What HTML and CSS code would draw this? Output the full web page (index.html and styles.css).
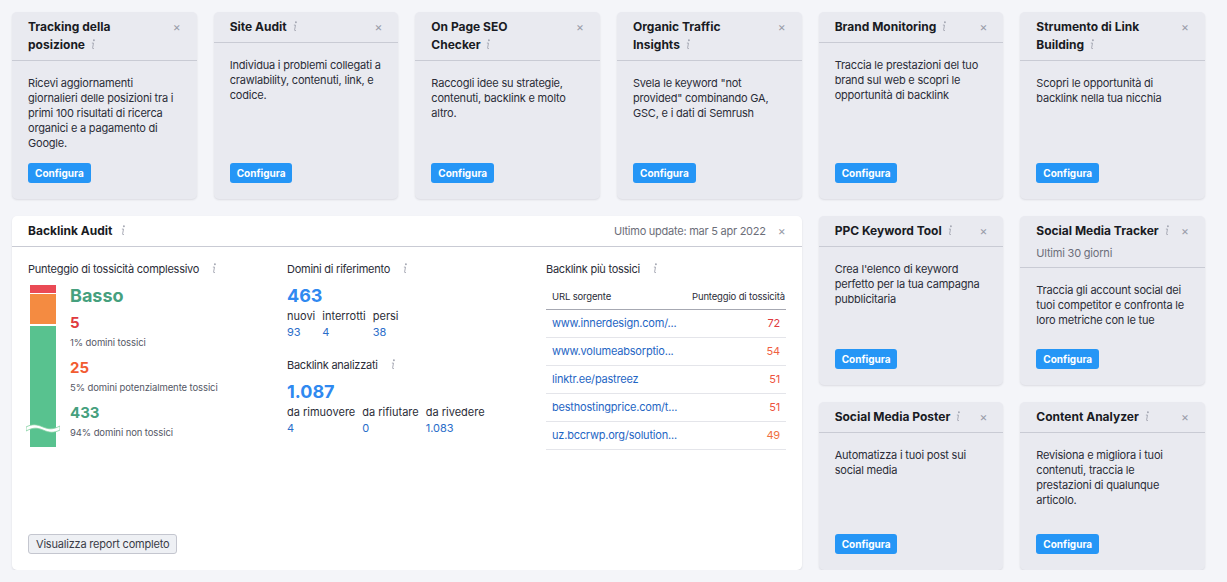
FILE: index.html
```html
<!DOCTYPE html>
<html lang="it">
<head>
<meta charset="utf-8">
<title>Dashboard</title>
<link rel="stylesheet" href="styles.css">
</head>
<body>
<svg width="0" height="0" style="position:absolute">
  <defs>
    <symbol id="info" viewBox="0 0 6 11">
      <circle cx="3.9" cy="1.2" r="0.95" fill="#a4a7b2"/>
      <path d="M1.9 4.1 H3.5 L2.6 8.9 Q2.4 9.9 3.9 9.5" fill="none" stroke="#a4a7b2" stroke-width="0.95"/>
    </symbol>
  </defs>
</svg>
<main class="grid">
  <section class="card">
    <header class="card-head">
      <h2 class="title">Tracking della posizione <svg class="info"><use href="#info"/></svg></h2>
      <span class="close">×</span>
    </header>
    <div class="card-body">
      <p>Ricevi aggiornamenti giornalieri delle posizioni tra i primi 100 risultati di ricerca organici e a pagamento di Google.</p>
      <button class="btn">Configura</button>
    </div>
  </section>
  <section class="card">
    <header class="card-head">
      <h2 class="title">Site Audit <svg class="info"><use href="#info"/></svg></h2>
      <span class="close">×</span>
    </header>
    <div class="card-body">
      <p>Individua i problemi collegati a crawlability, contenuti, link, e codice.</p>
      <button class="btn">Configura</button>
    </div>
  </section>
  <section class="card">
    <header class="card-head">
      <h2 class="title">On Page SEO Checker <svg class="info"><use href="#info"/></svg></h2>
      <span class="close">×</span>
    </header>
    <div class="card-body">
      <p>Raccogli idee su strategie, contenuti, backlink e molto altro.</p>
      <button class="btn">Configura</button>
    </div>
  </section>
  <section class="card">
    <header class="card-head">
      <h2 class="title">Organic Traffic Insights <svg class="info"><use href="#info"/></svg></h2>
      <span class="close">×</span>
    </header>
    <div class="card-body">
      <p>Svela le keyword "not provided" combinando GA, GSC, e i dati di Semrush</p>
      <button class="btn">Configura</button>
    </div>
  </section>
  <section class="card">
    <header class="card-head">
      <h2 class="title">Brand Monitoring <svg class="info"><use href="#info"/></svg></h2>
      <span class="close">×</span>
    </header>
    <div class="card-body">
      <p>Traccia le prestazioni del tuo brand sul web e scopri le opportunità di backlink</p>
      <button class="btn">Configura</button>
    </div>
  </section>
  <section class="card">
    <header class="card-head">
      <h2 class="title">Strumento di Link Building <svg class="info"><use href="#info"/></svg></h2>
      <span class="close">×</span>
    </header>
    <div class="card-body">
      <p>Scopri le opportunità di backlink nella tua nicchia</p>
      <button class="btn">Configura</button>
    </div>
  </section>

  <section class="audit">
    <header class="audit-head">
      <h2 class="title">Backlink Audit <svg class="info"><use href="#info"/></svg></h2>
      <span class="updated">Ultimo update: mar 5 apr 2022</span>
      <span class="close">×</span>
    </header>
    <div class="audit-body">
      <div class="col">
        <div class="label">Punteggio di tossicità complessivo <svg class="info"><use href="#info"/></svg></div>
        <div class="tox">
          <div class="bar">
            <div class="seg red"></div>
            <div class="seg orange"></div>
            <div class="seg green"></div>
            <svg class="wave" viewBox="0 0 34 12" width="34" height="12">
              <path d="M0 5 C6 2 10 2 17 5 C24 8 28 7 34 4 L34 8 C28 11 24 11 17 8 C10 5 6 6 0 9 Z" fill="#ffffff" stroke="#7fcf9f" stroke-width="0.8"/>
            </svg>
          </div>
          <div class="tox-text">
            <div class="level">Basso</div>
            <div class="grp"><div class="num n-red">5</div><div class="sub">1% domini tossici</div></div>
            <div class="grp"><div class="num n-orange">25</div><div class="sub">5% domini potenzialmente tossici</div></div>
            <div class="grp"><div class="num n-green">433</div><div class="sub">94% domini non tossici</div></div>
          </div>
        </div>
      </div>
      <div class="col">
        <div class="label">Domini di riferimento <svg class="info"><use href="#info"/></svg></div>
        <div class="big">463</div>
        <div class="stats">
          <span>nuovi</span><span>interrotti</span><span>persi</span>
          <a>93</a><a>4</a><a>38</a>
        </div>
        <div class="label mt">Backlink analizzati <svg class="info"><use href="#info"/></svg></div>
        <div class="big">1.087</div>
        <div class="stats">
          <span>da rimuovere</span><span>da rifiutare</span><span>da rivedere</span>
          <a>4</a><a>0</a><a>1.083</a>
        </div>
      </div>
      <div class="col">
        <div class="label">Backlink più tossici <svg class="info"><use href="#info"/></svg></div>
        <table class="tbl">
          <colgroup><col class="c-url"><col></colgroup>
          <thead>
            <tr><th>URL sorgente</th><th class="r">Punteggio di tossicità</th></tr>
          </thead>
          <tbody>
            <tr><td><a>www.innerdesign.com/...</a></td><td class="r s72">72</td></tr>
            <tr><td><a>www.volumeabsorptio...</a></td><td class="r s54">54</td></tr>
            <tr><td><a>linktr.ee/pastreez</a></td><td class="r s51">51</td></tr>
            <tr><td><a>besthostingprice.com/t...</a></td><td class="r s51">51</td></tr>
            <tr><td><a>uz.bccrwp.org/solution...</a></td><td class="r s49">49</td></tr>
          </tbody>
        </table>
      </div>
    </div>
    <footer class="audit-foot">
      <button class="btn-gray">Visualizza report completo</button>
    </footer>
  </section>

  <section class="card">
    <header class="card-head">
      <h2 class="title">PPC Keyword Tool <svg class="info"><use href="#info"/></svg></h2>
      <span class="close">×</span>
    </header>
    <div class="card-body">
      <p>Crea l'elenco di keyword perfetto per la tua campagna pubblicitaria</p>
      <button class="btn">Configura</button>
    </div>
  </section>
  <section class="card">
    <header class="card-head">
      <div class="head-text">
        <h2 class="title">Social Media Tracker <svg class="info"><use href="#info"/></svg></h2>
        <div class="subtitle">Ultimi 30 giorni</div>
      </div>
      <span class="close">×</span>
    </header>
    <div class="card-body">
      <p>Traccia gli account social dei tuoi competitor e confronta le loro metriche con le tue</p>
      <button class="btn">Configura</button>
    </div>
  </section>
  <section class="card">
    <header class="card-head">
      <h2 class="title">Social Media Poster <svg class="info"><use href="#info"/></svg></h2>
      <span class="close">×</span>
    </header>
    <div class="card-body">
      <p>Automatizza i tuoi post sui social media</p>
      <button class="btn">Configura</button>
    </div>
  </section>
  <section class="card">
    <header class="card-head">
      <h2 class="title">Content Analyzer <svg class="info"><use href="#info"/></svg></h2>
      <span class="close">×</span>
    </header>
    <div class="card-body">
      <p>Revisiona e migliora i tuoi contenuti, traccia le prestazioni di qualunque articolo.</p>
      <button class="btn">Configura</button>
    </div>
  </section>
</main>
</body>
</html>
```

FILE: styles.css
```css
* { box-sizing: border-box; }
html, body { margin: 0; padding: 0; }
body {
  background: #f4f5f9;
  font-family: Inter, "Noto Sans", "Liberation Sans", sans-serif;
  color: #2b2d38;
  font-size: 11px;
  overflow: hidden;
}
.grid {
  display: grid;
  width: 1205px;
  padding: 12px 0 0 12px;
  grid-template-columns: repeat(6, minmax(0, 1fr));
  grid-template-rows: 187px 169px 168px;
  column-gap: 17px;
  row-gap: 17px;
}
.card {
  background: #e9eaf0;
  border-radius: 5px;
  box-shadow: 0 1px 2px rgba(40, 44, 60, 0.12);
  display: flex;
  flex-direction: column;
  min-width: 0;
  min-height: 0;
  overflow: hidden;
}
.card-head {
  display: flex;
  align-items: flex-start;
  justify-content: space-between;
  padding: 6px 16px 6px 16px;
  border-bottom: 1px solid #c9cbd4;
}
.title {
  margin: 0;
  font-size: 12px;
  line-height: 18px;
  font-weight: 700;
  color: #191b23;
  max-width: 128px;
}
.head-text { display: flex; flex-direction: column; }
.head-text .title { max-width: 150px; }
.subtitle {
  color: #6c6e79;
  font-size: 11px;
  letter-spacing: -0.2px;
  line-height: 16px;
  margin-top: 5px;
}
.info {
  width: 6px;
  height: 11px;
  margin-left: 2px;
  vertical-align: -1px;
}
.close {
  color: #9a9daa;
  font-size: 12px;
  line-height: 18px;
}
.card-body {
  flex: 1;
  display: flex;
  flex-direction: column;
  align-items: flex-start;
  padding: 15px 16px 16px 16px;
}
.card-body p {
  margin: 0;
  line-height: 15px;
  font-size: 11px;
  letter-spacing: -0.2px;
  color: #2b2d38;
}
.btn {
  margin-top: auto;
  height: 20px;
  padding: 0 7px;
  border: none;
  border-radius: 3px;
  background: #2596f6;
  color: #fff;
  font-family: inherit;
  font-size: 10px;
  font-weight: 700;
  line-height: 20px;
}

/* Backlink audit */
.audit {
  grid-column: 1 / 5;
  grid-row: 2 / 4;
  background: #fff;
  border-radius: 5px;
  box-shadow: 0 1px 2px rgba(40, 44, 60, 0.12);
  display: flex;
  flex-direction: column;
}
.audit-head {
  height: 31px;
  display: flex;
  align-items: center;
  padding: 0 16px;
  border-bottom: 1px solid #c9cbd4;
}
.audit-head .title { max-width: none; flex: 1; }
.audit-head .info { margin-left: 5px; }
.updated { color: #6c6e79; font-size: 11px; letter-spacing: -0.25px; margin-right: 12px; }
.audit-body {
  display: grid;
  grid-template-columns: 240px 240px 240px;
  column-gap: 19px;
  padding: 15px 16px 0 16px;
}
.col { min-width: 0; }
.label { line-height: 15px; font-size: 11px; letter-spacing: -0.25px; color: #2b2d38; }
.label .info { margin-left: 9px; }
.label.mt { margin-top: 18px; }

.tox { display: flex; margin-top: 8px; }
.bar {
  position: relative;
  width: 26px;
  height: 162px;
  margin-left: 2px;
  display: flex;
  flex-direction: column;
}
.seg.red { height: 8px; background: #ea4a55; }
.seg.orange { height: 30px; background: #f48b41; margin-top: 1px; }
.seg.green { flex: 1; background: #58c28f; margin-top: 2px; }
.wave { position: absolute; left: -4px; top: 137px; }
.tox-text { margin-left: 14px; }
.level { font-size: 18px; line-height: 22px; font-weight: 700; color: #46a07e; }
.grp { margin-top: 6px; }
.grp + .grp { margin-top: 8px; }
.num { font-size: 15px; line-height: 20px; font-weight: 700; }
.n-red { color: #e03a3e; }
.n-orange { color: #f25c31; }
.n-green { color: #46a07e; }
.sub { font-size: 9.5px; letter-spacing: -0.1px; line-height: 14px; color: #555866; margin-top: 3px; }

.big {
  font-size: 18px;
  line-height: 22px;
  font-weight: 700;
  color: #2f89f0;
  margin-top: 8px;
}
.stats {
  display: grid;
  grid-template-columns: auto auto auto;
  justify-content: start;
  column-gap: 7px;
  line-height: 16px;
  margin-top: 1px;
}
.stats span { color: #2b2d38; }
.stats a { color: #2a6dc9; }

.tbl {
  width: 240px;
  margin-top: 8px;
  border-collapse: collapse;
  table-layout: fixed;
}
.c-url { width: 140px; }
.tbl th {
  font-weight: 400;
  font-size: 9.5px;
  letter-spacing: -0.15px;
  color: #2b2d38;
  text-align: left;
  white-space: nowrap;
  height: 24px;
  padding: 0 6px;
  border-bottom: 1px solid #a6a8b2;
}
.tbl th.r { padding-right: 5px; }
.tbl td {
  height: 28px;
  padding: 0 6px;
  border-bottom: 1px solid #e4e5ea;
  font-size: 11px;
  letter-spacing: -0.2px;
  white-space: nowrap;
  overflow: visible;
}
.tbl .r { text-align: right; }
.tbl a { color: #1f66c4; }
.s72 { color: #e03a3e; }
.s54 { color: #f0603f; }
.s51 { color: #ee5340; }
.s49 { color: #f07040; }

.audit-foot {
  margin-top: auto;
  padding: 0 16px 16px 16px;
}
.btn-gray {
  height: 20px;
  padding: 0 7px;
  background: #eef0f4;
  border: 1px solid #c4c6cf;
  border-radius: 3px;
  color: #3a3c47;
  font-family: inherit;
  font-size: 11px;
  letter-spacing: -0.2px;
  line-height: 18px;
}
```
